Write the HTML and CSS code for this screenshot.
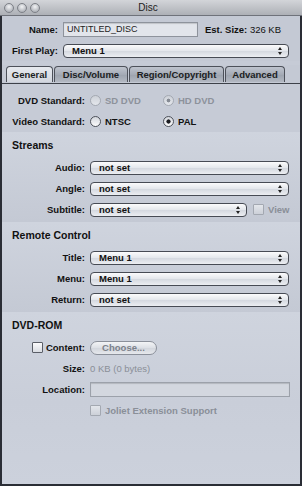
FILE: index.html
```html
<!DOCTYPE html>
<html>
<head>
  <title>Disc</title>
  <link rel="stylesheet" href="styles.css">
</head>
<body>
  <div class="window">
    <div class="titlebar">
      <div class="lights">
        <span class="light"></span>
        <span class="light"></span>
        <span class="light"></span>
      </div>
      <div class="title">Disc</div>
    </div>

    <div class="frame">
      <div class="top">
        <div class="row">
          <span class="label short">Name:</span>
          <div class="field name-field">UNTITLED_DISC</div>
          <span class="est">Est. Size: <span class="plain">326 KB</span></span>
        </div>
        <div class="row">
          <span class="label short">First Play:</span>
          <div class="popup wide">Menu 1</div>
        </div>
      </div>

      <div class="tabs">
        <div class="tab active tab-general">General</div>
        <div class="tab tab-disc">Disc/Volume</div>
        <div class="tab tab-region">Region/Copyright</div>
        <div class="tab tab-adv">Advanced</div>
      </div>

      <div class="section standards">
        <div class="row">
          <span class="label">DVD Standard:</span>
          <div class="option disabled"><span class="radio"></span>SD DVD</div>
          <div class="option disabled"><span class="radio on"></span>HD DVD</div>
        </div>
        <div class="row">
          <span class="label">Video Standard:</span>
          <div class="option"><span class="radio"></span>NTSC</div>
          <div class="option"><span class="radio on"></span>PAL</div>
        </div>
      </div>

      <div class="section">
        <div class="heading">Streams</div>
        <div class="row">
          <span class="label">Audio:</span>
          <div class="popup">not set</div>
        </div>
        <div class="row">
          <span class="label">Angle:</span>
          <div class="popup">not set</div>
        </div>
        <div class="row">
          <span class="label">Subtitle:</span>
          <div class="popup subtitle">not set</div>
          <span class="check disabled"></span>
          <span class="dim">View</span>
        </div>
      </div>

      <div class="section">
        <div class="heading">Remote Control</div>
        <div class="row">
          <span class="label">Title:</span>
          <div class="popup">Menu 1</div>
        </div>
        <div class="row">
          <span class="label">Menu:</span>
          <div class="popup">Menu 1</div>
        </div>
        <div class="row">
          <span class="label">Return:</span>
          <div class="popup">not set</div>
        </div>
      </div>

      <div class="section last">
        <div class="heading">DVD-ROM</div>
        <div class="row">
          <span class="label"><span class="check"></span>Content:</span>
          <div class="button">Choose...</div>
        </div>
        <div class="row">
          <span class="label">Size:</span>
          <span class="dim plain">0 KB (0 bytes)</span>
        </div>
        <div class="row">
          <span class="label">Location:</span>
          <div class="field location"></div>
        </div>
        <div class="row">
          <span class="label"></span>
          <span class="check disabled"></span>
          <span class="dim">Joliet Extension Support</span>
        </div>
      </div>
    </div>
  </div>
</body>
</html>
```

FILE: styles.css
```css
body {
  margin: 0;
  font-family: "Liberation Sans", Arial, sans-serif;
  font-size: 9.5px;
  font-weight: bold;
  color: #111;
  background: #c6cbd6;
}
.window {
  width: 302px;
  height: 486px;
  display: flex;
  flex-direction: column;
}
.titlebar {
  height: 15px;
  border-bottom: 1px solid #6f727a;
  background: linear-gradient(#d3d5d9, #adb0b6);
  display: flex;
  align-items: center;
}
.lights {
  display: flex;
  gap: 3px;
  padding-left: 4px;
  width: 60px;
}
.light {
  width: 8px;
  height: 8px;
  border-radius: 50%;
  border: 1px solid #7d8087;
  background: radial-gradient(circle at 50% 35%, #f2f3f5, #b4b7bd 70%);
}
.title {
  flex: 1;
  text-align: center;
  padding-right: 70px;
  font-weight: normal;
  font-size: 10px;
  color: #222;
}
.frame {
  flex: 1;
  border: 2px solid #2a2d35;
  border-top: none;
  display: flex;
  flex-direction: column;
}
.top {
  padding-top: 3px;
  background: #c4c9d4;
}
.row {
  height: 21px;
  display: flex;
  align-items: center;
}
.label {
  width: 83px;
  margin-right: 5px;
  display: flex;
  justify-content: flex-end;
  align-items: center;
  gap: 3px;
  white-space: nowrap;
}
.label.short {
  width: 56px;
}
.field {
  height: 13px;
  border: 1px solid #8e939c;
  background: #e2e5eb;
  box-shadow: inset 0 1px 1px rgba(0, 0, 0, 0.15);
  font-weight: normal;
  font-size: 9px;
  line-height: 13px;
  padding-left: 3px;
  box-sizing: content-box;
}
.name-field {
  width: 130px;
  color: #222;
}
.location {
  width: 195px;
  background: #d3d7df;
  border-color: #9ca1aa;
}
.est {
  margin-left: 7px;
}
.plain {
  font-weight: normal;
}
.popup {
  position: relative;
  width: 189px;
  height: 12px;
  padding-left: 8px;
  line-height: 12px;
  border: 1px solid #474b54;
  border-radius: 4px;
  background: linear-gradient(#fbfbfc, #e3e6eb 50%, #d4d8df 51%, #eceef2);
}
.popup.wide {
  width: 216px;
}
.popup.subtitle {
  width: 147px;
  margin-right: 6px;
}
.popup::before,
.popup::after {
  content: "";
  position: absolute;
  right: 6px;
  border-left: 2px solid transparent;
  border-right: 2px solid transparent;
}
.popup::before {
  top: 2px;
  border-bottom: 3px solid #222;
}
.popup::after {
  top: 7px;
  border-top: 3px solid #222;
}
.tabs {
  display: flex;
  gap: 1px;
  padding-left: 4px;
  margin-top: 4px;
  height: 18px;
  border-bottom: 1px solid #3d4149;
  background: #c4c9d4;
}
.tab {
  height: 15px;
  margin-top: 1px;
  line-height: 15px;
  text-align: center;
  border: 1px solid #4d515a;
  border-bottom: none;
  border-radius: 4px 4px 0 0;
  background: linear-gradient(#bfc4ce, #a5abb6 50%, #9ca3ae 51%, #b3b8c2);
  color: #1b1d22;
}
.tab.active {
  background: linear-gradient(#e6e9ee, #d2d6de);
}
.tab-general { width: 45px; }
.tab-disc { width: 72px; }
.tab-region { width: 93px; }
.tab-adv { width: 58px; }
.section {
  padding: 5px 0 2px;
  background: linear-gradient(#cfd4de, #c4c9d4);
}
.section.standards {
  padding: 6px 0 0;
  background: #c6cbd6;
}
.section.last {
  flex: 1;
  background: linear-gradient(#cfd4de, #c9ced9 90px, #ccd1dc);
}
.heading {
  height: 16px;
  line-height: 16px;
  margin-bottom: 4px;
  padding-left: 10px;
  font-size: 10.5px;
}
.option {
  width: 73px;
  display: flex;
  align-items: center;
  gap: 4px;
}
.option.disabled {
  color: #8d929b;
}
.radio {
  width: 9px;
  height: 9px;
  border-radius: 50%;
  border: 1px solid #4e525b;
  background: linear-gradient(#d3d6dc, #fbfbfc);
}
.radio.on {
  background: radial-gradient(circle, #1c1d22 0 1.8px, transparent 2.4px), linear-gradient(#d3d6dc, #fbfbfc);
}
.option.disabled .radio {
  border-color: #a4a9b2;
  background: linear-gradient(#cdd1d8, #e4e7ec);
}
.option.disabled .radio.on {
  background: radial-gradient(circle, #868b94 0 1.6px, transparent 2.2px), linear-gradient(#cdd1d8, #e4e7ec);
}
.check {
  width: 9px;
  height: 9px;
  border: 1px solid #5a5e67;
  border-radius: 1px;
  background: linear-gradient(#fbfbfc, #d9dce2);
}
.check.disabled {
  border-color: #a3a8b1;
  background: linear-gradient(#e3e6eb, #ccd0d8);
  margin-right: 4px;
}
.dim {
  color: #8a8f98;
}
.button {
  width: 65px;
  height: 12px;
  line-height: 12px;
  text-align: center;
  border: 1px solid #8b909a;
  border-radius: 7px;
  background: linear-gradient(#f3f4f6, #dcdfe5 50%, #d2d6dd 51%, #e6e8ec);
  color: #7c818a;
}
```
